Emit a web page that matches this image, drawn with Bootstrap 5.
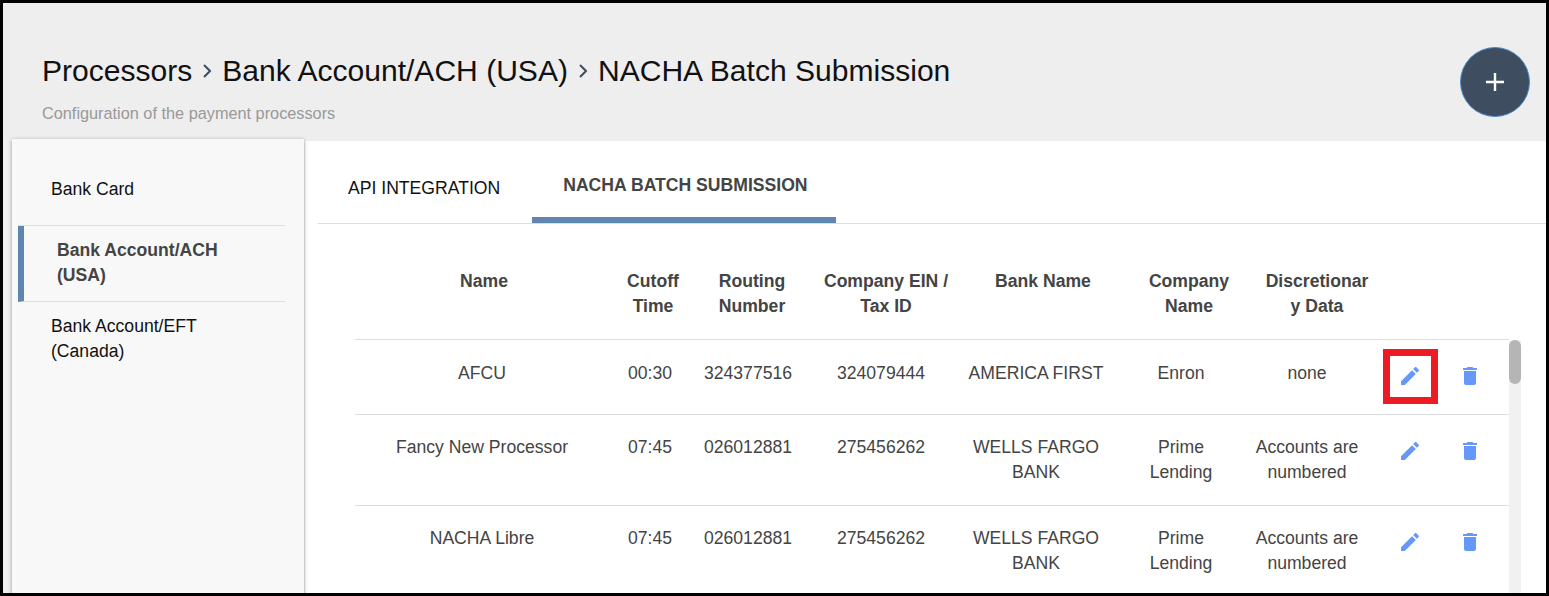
<!DOCTYPE html>
<html lang="en">
<head>
  <meta charset="UTF-8" />
  <meta name="viewport" content="width=device-width, initial-scale=1.0"/>
  <link href="https://cdn.jsdelivr.net/npm/bootstrap@5.3.5/dist/css/bootstrap.min.css" rel="stylesheet" />
  <script src="https://cdn.jsdelivr.net/npm/bootstrap@5.3.5/dist/js/bootstrap.bundle.min.js" defer></script>
  <title>Processors</title>
  <style>
    html, body { height: 100%; overflow: hidden; }
    body {
      font-family: "Liberation Sans", Arial, sans-serif;
      font-size: 17.6px;
      line-height: 25px;
      color: #444;
      background: #eee;
    }

    .app-frame {
      height: 596px;
      border: 3px solid #000;
      overflow: hidden;
    }

    /* header */
    .page-head {
      height: 138px;
      flex: 0 0 138px;
      background: #eee;
      padding: 50px 16px 0 39px;
    }
    .crumbs {
      font-size: 30.05px;
      line-height: 36px;
      font-weight: 400;
      color: #111;
      margin: 0;
    }
    .crumb-sep { margin: 0 11px; flex: 0 0 auto; }
    .page-sub {
      font-size: 16.3px;
      line-height: 24px;
      color: #999;
      margin: 12px 0 0;
    }
    .add-btn {
      width: 70px;
      height: 70px;
      margin-top: -6px;
      padding: 0;
      border: 1px solid #4a8ac9;
      border-radius: 50%;
      background: #3e4e60;
    }

    /* sidebar */
    .side-panel {
      width: 292px;
      flex: 0 0 292px;
      margin: -2px 0 0 9px;
      padding: 35px 19px 0 6px;
      background: #f8f8f8;
      box-shadow: 0 1px 4px rgba(0, 0, 0, .35);
      position: relative;
      z-index: 1;
    }
    .side-item {
      background: transparent;
      border: 0;
      border-bottom: 1px solid #ddd;
      padding: 12px 33px 13px;
      color: #111;
    }
    .side-item:first-child { padding: 3px 33px 23px; }
    .side-item.is-current {
      border-left: 6px solid #5e86ae;
      padding: 12px 33px 13px;
      font-weight: 700;
      color: #444;
    }

    /* tabs */
    .main-panel {
      min-width: 0;
      margin-left: 1px;
      background: #fff;
    }
    .tab-bar {
      margin-left: 13px;
      height: 83px;
      border-bottom: 1px solid #ddd;
    }
    .tab-link {
      color: #111;
      padding: 35px 30px 0;
      height: 82px;
      margin-right: 2px;
      white-space: nowrap;
    }
    .tab-link.is-current {
      color: #444;
      font-weight: 700;
      padding: 32px 30px 0 31px;
      width: 304px;
      border-bottom: 6px solid #5e86ae;
    }

    /* tables */
    .grid-zone { margin-left: 50px; }
    .head-grid, .rows-grid {
      table-layout: fixed;
      width: 1154px;
      margin: 0;
      --bs-table-color: #444;
      --bs-table-bg: transparent;
      --bs-table-border-color: #ddd;
    }
    .head-grid { margin-top: 25px; }
    .head-grid th {
      padding: 20px 12px;
      text-align: center;
      vertical-align: top;
      overflow-wrap: anywhere;
      color: #444;
    }
    .rows-grid td {
      padding: 20px 12px;
      text-align: center;
      vertical-align: top;
    }
    .rows-grid tr:first-child td:not(.act-cell) { padding-top: 21px; }
    .rows-grid td.act-cell { padding: 9px 0 10px; }
    .rows-grid td.trash-cell { padding-right: 22px; }
    .act-btn {
      width: 34px;
      height: 55px;
      padding: 0;
      border: 0;
      background: transparent;
    }
    .act-btn svg { fill: #6698fa; display: block; margin: -2px auto 0; }
    .callout { position: relative; width: 55px; height: 55px; }
    .callout .act-btn { width: 55px; }
    .callout-box {
      position: absolute;
      left: 0;
      top: 0;
      width: 55px;
      height: 55px;
      border: 7px solid #ed1c24;
      pointer-events: none;
    }
    .scroll-track {
      width: 12px;
      flex: 0 0 12px;
      background: #f1f1f1;
      height: 300px;
    }
    .scroll-thumb {
      height: 44px;
      border-radius: 6px;
      background: #b5b5b5;
    }
  </style>
</head>
<body>

  <div class="app-frame d-flex flex-column">

    <header class="page-head d-flex justify-content-between">
      <div>
        <h1 class="crumbs d-flex align-items-center">
          <span>Processors</span>
          <svg class="crumb-sep" width="8" height="14" viewBox="0 0 8 14"><path d="M1 1l6 6-6 6" fill="none" stroke="#3e4e60" stroke-width="2"/></svg>
          <span>Bank Account/ACH (USA)</span>
          <svg class="crumb-sep" width="8" height="14" viewBox="0 0 8 14"><path d="M1 1l6 6-6 6" fill="none" stroke="#3e4e60" stroke-width="2"/></svg>
          <span>NACHA Batch Submission</span>
        </h1>
        <p class="page-sub">Configuration of the payment processors</p>
      </div>
      <button type="button" class="btn add-btn d-flex align-items-center justify-content-center" aria-label="Add">
        <svg width="20" height="20" viewBox="0 0 20 20"><path d="M10 1v18M1 10h18" stroke="#fff" stroke-width="2.4" fill="none"/></svg>
      </button>
    </header>

    <div class="d-flex flex-grow-1">

      <aside class="side-panel">
        <div class="list-group list-group-flush">
          <div class="list-group-item side-item">Bank Card</div>
          <div class="list-group-item side-item is-current">Bank Account/ACH (USA)</div>
          <div class="list-group-item side-item">Bank Account/EFT (Canada)</div>
        </div>
      </aside>

      <main class="main-panel flex-grow-1">
        <ul class="nav flex-nowrap tab-bar">
          <li class="nav-item"><div class="tab-link">API INTEGRATION</div></li>
          <li class="nav-item"><div class="tab-link is-current">NACHA BATCH SUBMISSION</div></li>
        </ul>

        <div class="grid-zone">
          <table class="table head-grid">
            <colgroup>
              <col style="width:258px"><col style="width:80px"><col style="width:118px"><col style="width:150px"><col style="width:164px"><col style="width:128px"><col style="width:128px"><col>
            </colgroup>
            <thead>
              <tr>
                <th>Name</th>
                <th>Cutoff Time</th>
                <th>Routing Number</th>
                <th>Company EIN / Tax ID</th>
                <th>Bank Name</th>
                <th>Company Name</th>
                <th>Discretionary Data</th>
                <th></th>
              </tr>
            </thead>
          </table>

          <div class="d-flex align-items-start">
            <table class="table rows-grid">
              <colgroup>
                <col style="width:254px"><col style="width:82px"><col style="width:114px"><col style="width:152px"><col style="width:158px"><col style="width:132px"><col style="width:120px"><col style="width:86px"><col>
              </colgroup>
              <tbody>
                <tr>
                  <td>AFCU</td>
                  <td>00:30</td>
                  <td>324377516</td>
                  <td>324079444</td>
                  <td class="px-1">AMERICA FIRST</td>
                  <td>Enron</td>
                  <td class="px-1">none</td>
                  <td class="act-cell">
                    <div class="callout mx-auto">
                      <button type="button" class="act-btn d-block" aria-label="Edit"><svg width="24" height="24" viewBox="0 0 24 24"><path d="M3 17.25V21h3.75L17.81 9.94l-3.75-3.75L3 17.25zM20.71 7.04c.39-.39.39-1.02 0-1.41l-2.34-2.34c-.39-.39-1.02-.39-1.41 0l-1.83 1.83 3.75 3.75 1.83-1.83z"/></svg></button>
                      <span class="callout-box"></span>
                    </div>
                  </td>
                  <td class="act-cell trash-cell">
                    <button type="button" class="act-btn d-block mx-auto" aria-label="Delete"><svg width="24" height="24" viewBox="0 0 24 24"><path d="M6 19c0 1.1.9 2 2 2h8c1.1 0 2-.9 2-2V7H6v12zM19 4h-3.5l-1-1h-5l-1 1H5v2h14V4z"/></svg></button>
                  </td>
                </tr>
                <tr>
                  <td>Fancy New Processor</td>
                  <td>07:45</td>
                  <td>026012881</td>
                  <td>275456262</td>
                  <td class="px-1">WELLS FARGO BANK</td>
                  <td>Prime Lending</td>
                  <td class="px-1">Accounts are numbered</td>
                  <td class="act-cell">
                    <button type="button" class="act-btn d-block mx-auto" aria-label="Edit"><svg width="24" height="24" viewBox="0 0 24 24"><path d="M3 17.25V21h3.75L17.81 9.94l-3.75-3.75L3 17.25zM20.71 7.04c.39-.39.39-1.02 0-1.41l-2.34-2.34c-.39-.39-1.02-.39-1.41 0l-1.83 1.83 3.75 3.75 1.83-1.83z"/></svg></button>
                  </td>
                  <td class="act-cell trash-cell">
                    <button type="button" class="act-btn d-block mx-auto" aria-label="Delete"><svg width="24" height="24" viewBox="0 0 24 24"><path d="M6 19c0 1.1.9 2 2 2h8c1.1 0 2-.9 2-2V7H6v12zM19 4h-3.5l-1-1h-5l-1 1H5v2h14V4z"/></svg></button>
                  </td>
                </tr>
                <tr>
                  <td>NACHA Libre</td>
                  <td>07:45</td>
                  <td>026012881</td>
                  <td>275456262</td>
                  <td class="px-1">WELLS FARGO BANK</td>
                  <td>Prime Lending</td>
                  <td class="px-1">Accounts are numbered</td>
                  <td class="act-cell">
                    <button type="button" class="act-btn d-block mx-auto" aria-label="Edit"><svg width="24" height="24" viewBox="0 0 24 24"><path d="M3 17.25V21h3.75L17.81 9.94l-3.75-3.75L3 17.25zM20.71 7.04c.39-.39.39-1.02 0-1.41l-2.34-2.34c-.39-.39-1.02-.39-1.41 0l-1.83 1.83 3.75 3.75 1.83-1.83z"/></svg></button>
                  </td>
                  <td class="act-cell trash-cell">
                    <button type="button" class="act-btn d-block mx-auto" aria-label="Delete"><svg width="24" height="24" viewBox="0 0 24 24"><path d="M6 19c0 1.1.9 2 2 2h8c1.1 0 2-.9 2-2V7H6v12zM19 4h-3.5l-1-1h-5l-1 1H5v2h14V4z"/></svg></button>
                  </td>
                </tr>
              </tbody>
            </table>
            <div class="scroll-track"><div class="scroll-thumb"></div></div>
          </div>
        </div>
      </main>

    </div>
  </div>

</body>
</html>
